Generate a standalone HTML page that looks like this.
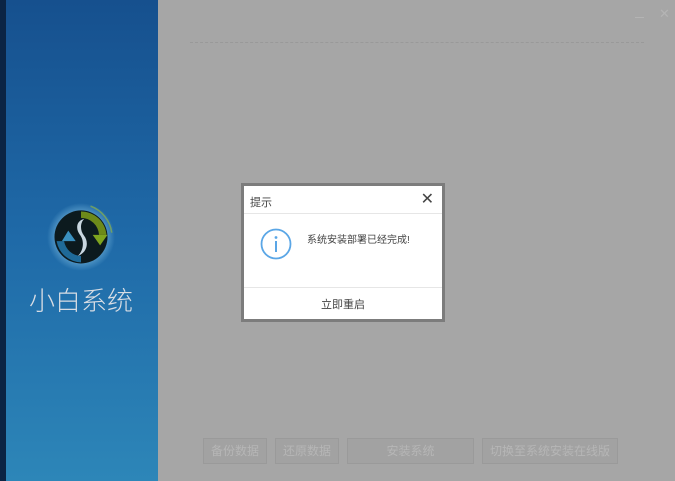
<!DOCTYPE html>
<html><head><meta charset="utf-8"><style>
*{margin:0;padding:0;box-sizing:border-box}
body{width:675px;height:481px;overflow:hidden;background:#a6a6a6;position:relative;font-family:"Liberation Sans","Noto Sans CJK SC",sans-serif}
.side{position:absolute;left:0;top:0;width:158px;height:481px;background:linear-gradient(#16508e,#1f6aa8 50%,#2d86b8);border-left:6px solid #0b2444}
.logo{position:absolute;left:29px;top:281px;width:120px;font-size:26px;color:#d8dde4;letter-spacing:0;font-weight:300;white-space:nowrap}
.dash{position:absolute;left:190px;top:42px;width:454px;border-top:1px dashed #999}
.btn{position:absolute;top:438px;height:26px;background:#a2a2a2;border:1px solid #9a9a9a;color:#b6b6b6;font-size:12px;text-align:center;line-height:24px}
.dlg{position:absolute;left:241px;top:183px;width:204px;height:139px;background:#fff;border:3px solid #7c7c7c}
.dlg .t{position:absolute;left:6px;top:8px;font-size:11px;color:#444}
.dlg .x{position:absolute;right:8px;top:3px;font-size:16px;color:#444}
.dlg .l1{position:absolute;left:0;right:0;top:27px;border-top:1px solid #e6e6e6}
.dlg .l2{position:absolute;left:0;right:0;top:101px;border-top:1px solid #e6e6e6}
.dlg .m{position:absolute;left:63px;top:45px;font-size:10px;color:#444}
.dlg .b{position:absolute;left:0;right:0;top:110px;text-align:center;font-size:11px;color:#444}
</style></head><body>
<div class="side"></div>
<svg style="position:absolute;left:46px;top:203px" width="70" height="70" viewBox="0 0 66 66">
<defs><radialGradient id="g" cx=".5" cy=".5" r=".5"><stop offset=".75" stop-color="#6fb0d8" stop-opacity=".6"/><stop offset="1" stop-color="#6fb0d8" stop-opacity="0"/></radialGradient></defs>
<circle cx="33" cy="32" r="32" fill="url(#g)"/>
<circle cx="33" cy="32" r="25" fill="#0c1a1e"/>
<path d="M33 8 A24 24 0 0 1 57 30 L50 30 A17 17 0 0 0 33 14Z" fill="#6d8a1a"/>
<path d="M44 30 L58 30 L51 40Z" fill="#7ea41f"/>
<path d="M15 36 L28 36 L21 26Z" fill="#3a90bf"/>
<path d="M17 36 A17 17 0 0 0 33 50 L33 56 A24 24 0 0 1 10 36Z" fill="#1f6a98"/>
<path d="M36 15 C28 17 28 25 32 30 C36 35 36 44 30 50 C40 46 40 36 36 31 C32 26 32 19 36 15Z" fill="#c9d7e0"/>
<path d="M42 3 A31 31 0 0 1 62 28" stroke="#8ab04a" stroke-width="1.5" fill="none" opacity=".7"/>
</svg>
<div class="logo">小白系统</div>
<div class="dash"></div>
<div style="position:absolute;left:635px;top:17px;width:9px;border-top:1px solid #b4b4b4"></div>
<div style="position:absolute;left:659px;top:6px;font-size:13px;color:#b4b4b4">✕</div>
<div class="btn" style="left:203px;width:64px">备份数据</div>
<div class="btn" style="left:275px;width:64px">还原数据</div>
<div class="btn" style="left:347px;width:127px">安装系统</div>
<div class="btn" style="left:482px;width:136px">切换至系统安装在线版</div>
<div class="dlg">
<div class="t">提示</div><div class="x">✕</div>
<div class="l1"></div>
<svg style="position:absolute;left:16px;top:42px" width="32" height="32" viewBox="0 0 32 32"><circle cx="16" cy="16" r="14.5" fill="none" stroke="#5aa6e6" stroke-width="1.8"/><circle cx="16" cy="9.5" r="1.4" fill="#5aa6e6"/><rect x="15" y="13" width="2" height="11" fill="#5aa6e6"/></svg>
<div class="m">系统安装部署已经完成!</div>
<div class="l2"></div>
<div class="b">立即重启</div>
</div>
</body></html>
